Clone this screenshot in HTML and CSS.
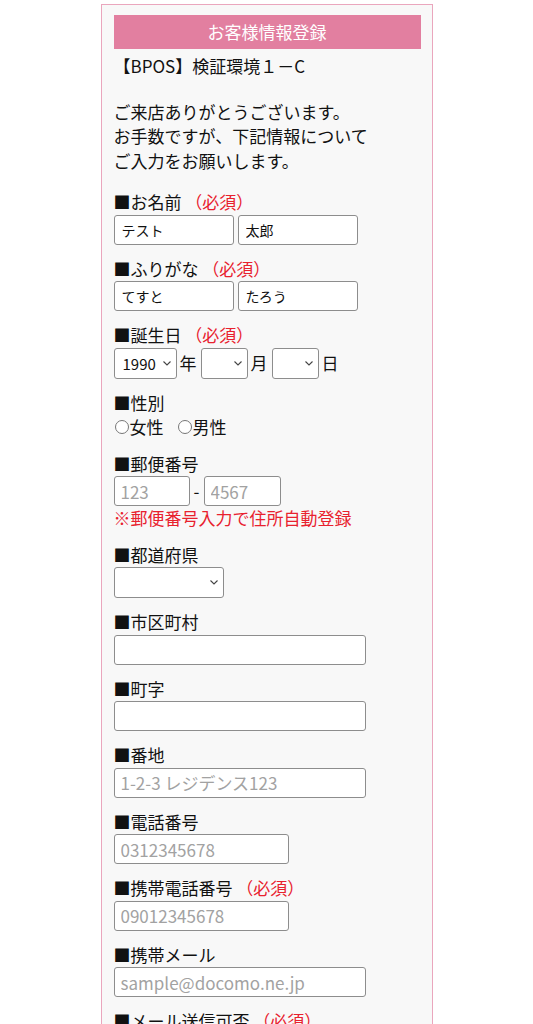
FILE: index.html
```html
<!DOCTYPE html>
<html lang="ja">
<head>
<meta charset="utf-8">
<title>お客様情報登録</title>
<link rel="stylesheet" href="styles.css">
</head>
<body>
<div class="container">
  <div class="header">お客様情報登録</div>
  <div class="shop">【BPOS】検証環境１－C</div>
  <p class="greeting">ご来店ありがとうございます。<br>お手数ですが、下記情報について<br>ご入力をお願いします。</p>

  <div class="field">
    <div class="label">■お名前 <span class="req">（必須）</span></div>
    <div class="row">
      <input class="input name" type="text" value="テスト">
      <input class="input name" type="text" value="太郎">
    </div>
  </div>

  <div class="field">
    <div class="label">■ふりがな <span class="req">（必須）</span></div>
    <div class="row">
      <input class="input name" type="text" value="てすと">
      <input class="input name" type="text" value="たろう">
    </div>
  </div>

  <div class="field">
    <div class="label">■誕生日 <span class="req">（必須）</span></div>
    <div class="row date">
      <span class="sel year"><select class="select"><option>1990</option></select><svg class="chev" width="8" height="5" viewBox="0 0 8 5"><path d="M0.5 0.5 L4 4 L7.5 0.5" fill="none" stroke="#444" stroke-width="1.1"/></svg></span><span class="unit">年</span>
      <span class="sel md"><select class="select"><option></option></select><svg class="chev" width="8" height="5" viewBox="0 0 8 5"><path d="M0.5 0.5 L4 4 L7.5 0.5" fill="none" stroke="#444" stroke-width="1.1"/></svg></span><span class="unit">月</span>
      <span class="sel md"><select class="select"><option></option></select><svg class="chev" width="8" height="5" viewBox="0 0 8 5"><path d="M0.5 0.5 L4 4 L7.5 0.5" fill="none" stroke="#444" stroke-width="1.1"/></svg></span><span class="unit">日</span>
    </div>
  </div>

  <div class="field">
    <div class="label">■性別</div>
    <div class="radios">
      <label class="radio first"><input type="radio" name="sex">女性</label>
      <label class="radio"><input type="radio" name="sex">男性</label>
    </div>
  </div>

  <div class="field">
    <div class="label">■郵便番号</div>
    <div class="row zip">
      <input class="input zipbox" type="text" placeholder="123"><span class="dash">-</span><input class="input zipbox" type="text" placeholder="4567">
    </div>
    <div class="note">※郵便番号入力で住所自動登録</div>
  </div>

  <div class="field">
    <div class="label">■都道府県</div>
    <div class="row">
      <span class="sel pref"><select class="select"><option></option></select><svg class="chev" width="8" height="5" viewBox="0 0 8 5"><path d="M0.5 0.5 L4 4 L7.5 0.5" fill="none" stroke="#444" stroke-width="1.1"/></svg></span>
    </div>
  </div>

  <div class="field">
    <div class="label">■市区町村</div>
    <div class="row"><input class="input wide" type="text"></div>
  </div>

  <div class="field">
    <div class="label">■町字</div>
    <div class="row"><input class="input wide" type="text"></div>
  </div>

  <div class="field">
    <div class="label">■番地</div>
    <div class="row"><input class="input wide" type="text" placeholder="1-2-3 レジデンス123"></div>
  </div>

  <div class="field">
    <div class="label">■電話番号</div>
    <div class="row"><input class="input tel" type="text" placeholder="0312345678"></div>
  </div>

  <div class="field">
    <div class="label">■携帯電話番号 <span class="req">（必須）</span></div>
    <div class="row"><input class="input tel" type="text" placeholder="09012345678"></div>
  </div>

  <div class="field">
    <div class="label">■携帯メール</div>
    <div class="row"><input class="input wide" type="text" placeholder="sample@docomo.ne.jp"></div>
  </div>

  <div class="field">
    <div class="label">■メール送信可否 <span class="req">（必須）</span></div>
    <div class="radios">
      <label class="radio first"><input type="radio" name="mail">受け取る</label>
      <label class="radio"><input type="radio" name="mail">受け取らない</label>
    </div>
  </div>
</div>
</body>
</html>
```

FILE: styles.css
```css
html, body {
  margin: 0;
  padding: 0;
  background: #ffffff;
}
body {
  font-family: "Noto Sans CJK JP", "Noto Sans", sans-serif;
  font-size: 17px;
  line-height: 24.5px;
  color: #111111;
}
.container {
  width: 332px;
  box-sizing: border-box;
  margin: 4px auto 0;
  padding: 10px 11px 40px 12px;
  background: #f8f8f8;
  border: 1px solid #eaa6bd;
}
.header {
  height: 34px;
  line-height: 34px;
  background: #e27fa0;
  color: #ffffff;
  text-align: center;
  font-size: 17px;
}
.shop {
  margin-top: 5px;
}
.greeting {
  margin: 21px 0 17px;
}
.field {
  margin-bottom: 12px;
}
.req {
  color: #e8212e;
}
.row {
  display: flex;
  align-items: center;
  gap: 4px;
}
.input {
  box-sizing: border-box;
  height: 30px;
  margin: 0;
  padding: 0 6px;
  border: 1px solid #8d8d8d;
  border-radius: 3px;
  background: #ffffff;
  font-family: "Noto Sans CJK JP", "Noto Sans", sans-serif;
  font-size: 17px;
  color: #111111;
}
.input::placeholder {
  color: #a2a2a2;
}
.name {
  width: 120px;
  font-size: 14px;
  padding: 0 7px;
}
.zipbox { width: 76px; }
.zipbox + .dash + .zipbox { width: 77px; }
.dash { width: 6px; text-align: center; }
.wide { width: 252px; }
.tel { width: 175px; }
.sel {
  position: relative;
  display: inline-block;
  height: 31px;
}
.select {
  -webkit-appearance: none;
  appearance: none;
  box-sizing: border-box;
  width: 100%;
  height: 31px;
  margin: 0;
  padding: 0 18px 0 8px;
  border: 1px solid #8d8d8d;
  border-radius: 3px;
  background-color: #ffffff;
  font-family: "Noto Sans CJK JP", "Noto Sans", sans-serif;
  font-size: 15px;
  color: #111111;
}
.chev {
  position: absolute;
  right: 6px;
  top: 13px;
  pointer-events: none;
}
.date { gap: 3px; }
.year { width: 63px; }
.md { width: 47px; }
.pref { width: 110px; }
.unit { margin-right: 1px; }
.radios {
  display: flex;
  align-items: center;
}
.radio {
  display: inline-flex;
  align-items: center;
}
.radio input {
  width: 14px;
  height: 14px;
  margin: 0 1px 0 1px;
}
.radio.first { margin-right: 13px; }
.note {
  color: #e8212e;
}
```
